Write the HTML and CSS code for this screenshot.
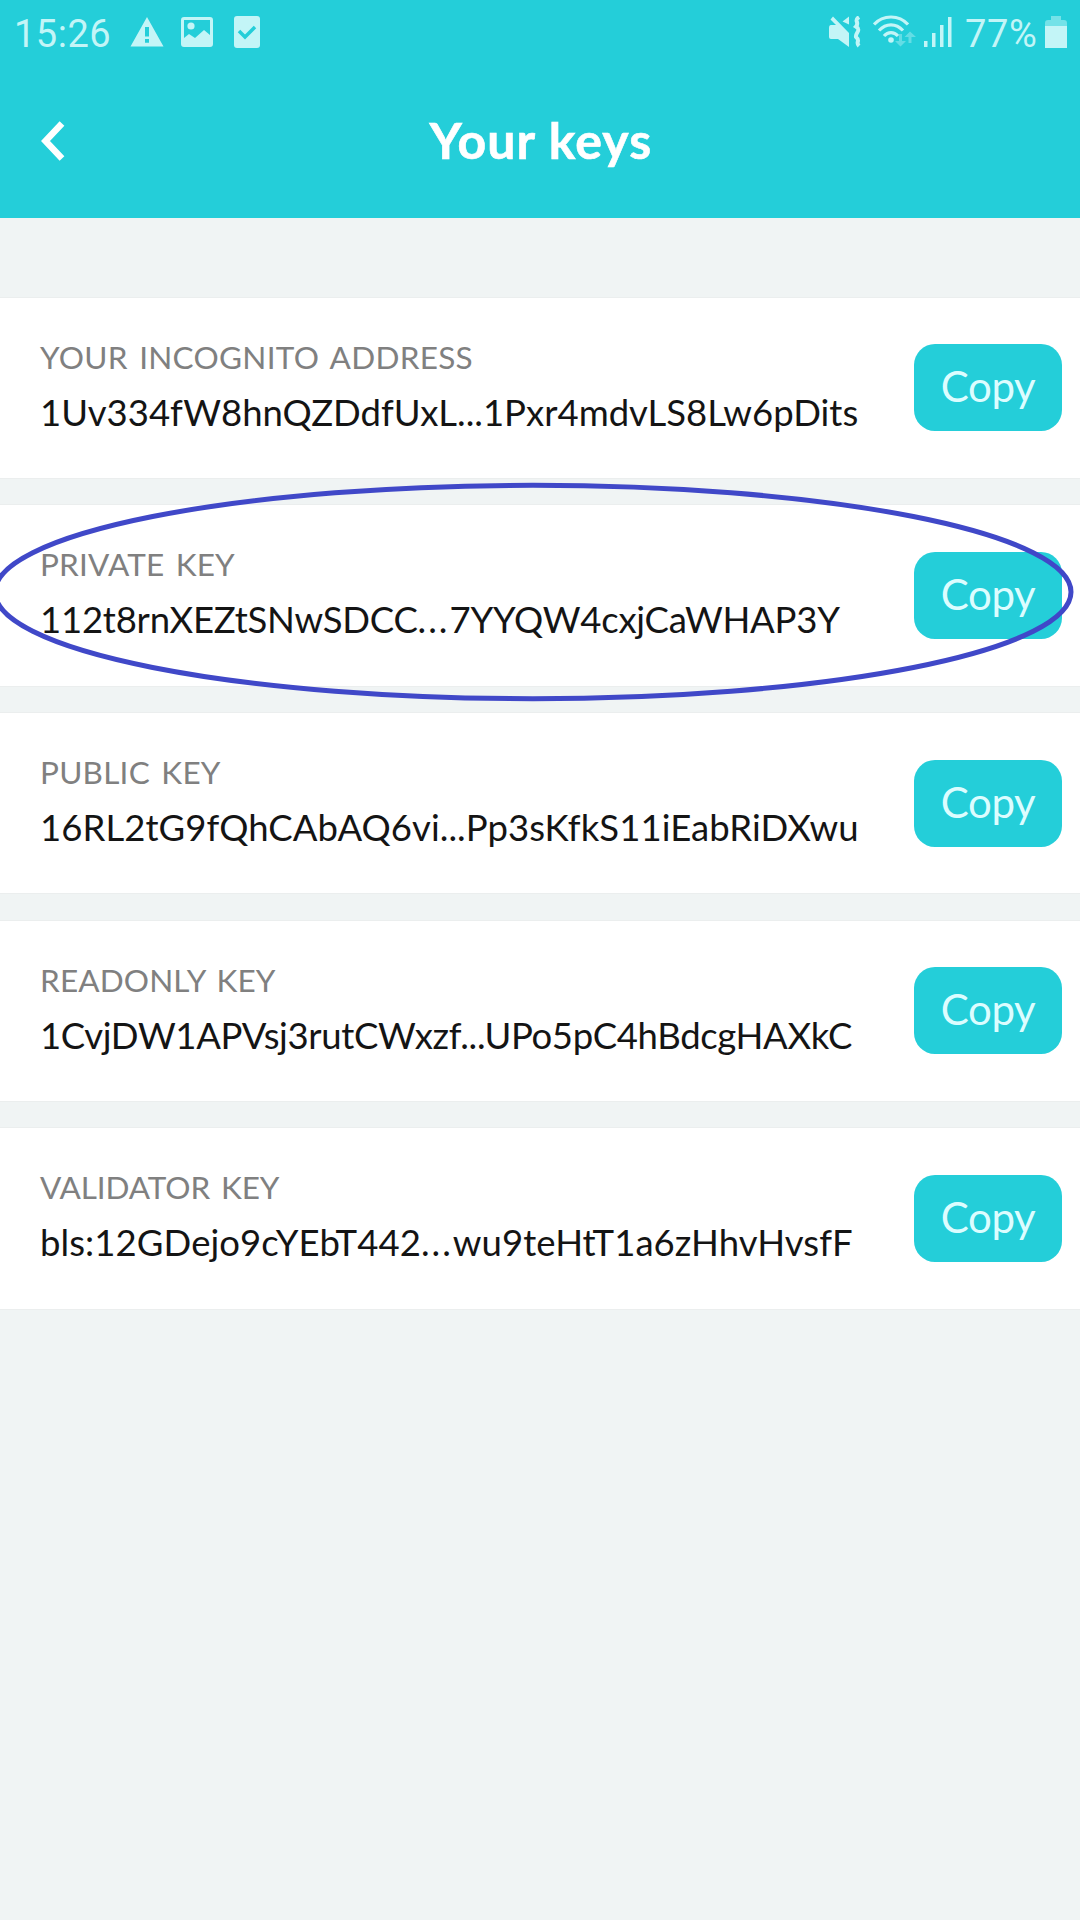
FILE: index.html
```
<!DOCTYPE html>
<html lang="en">
<head>
<meta charset="utf-8">
<title>Your keys</title>
<link rel="stylesheet" href="styles.css">
</head>
<body>
<div class="screen">
  <div class="statusbar">
    <div class="status-left">
      <span class="clock">15:26</span>
      <svg class="icon-warning" width="34" height="30" viewBox="0 0 34 30"><path fill="currentColor" fill-rule="evenodd" d="M17 0 33.500 29.500H.5ZM15 10v9.500h4V10Zm0 12v3.800h4V22Z"/></svg>
      <svg class="icon-image" width="32" height="30" viewBox="0 0 32 30"><path fill="currentColor" fill-rule="evenodd" d="M3 0h26a3 3 0 0 1 3 3v24a3 3 0 0 1-3 3H3a3 3 0 0 1-3-3V3a3 3 0 0 1 3-3Zm0 3v18l5-4 6 4 9-8 6 5V3Z"/><circle cx="10" cy="9" r="3.600" fill="currentColor"/></svg>
      <svg class="icon-check" width="26" height="32" viewBox="0 0 26 32"><rect width="26" height="32" rx="3" fill="currentColor"/><path d="m5 15 6 6L21 11" fill="none" stroke="#24ced9" stroke-width="3.500"/></svg>
    </div>
    <div class="status-right">
      <svg class="icon-mute" width="33" height="32" viewBox="0 0 33 32"><path fill="currentColor" d="M4 .5 20 17v14L9 23H2q-2 0-2-2v-9q0-3 2-3h5L1.500 3.500ZM20 .5v8L13.500 5.500Z"/><path d="M30 1c-6 4 1 5-3 9.500 6 4-1 6 0 10.500 5 4-1 5 3 9" fill="none" stroke="currentColor" stroke-width="4"/></svg>
      <svg class="icon-wifi" width="43" height="33" viewBox="0 0 43 33"><g fill="none" stroke="currentColor" stroke-width="3.200"><path d="M1 9.500C10-.5 26-.5 35 9.500"/><path d="M6 15.500c7-7.500 17-7.500 24 0"/><path d="M11 21c4-4.500 10-4.500 14 0"/></g><circle cx="18" cy="25" r="2.800" fill="currentColor"/><path fill="currentColor" opacity=".4" d="M26 19h3v7h4l-5.500 5.500L22 26h4ZM35.500 28h3v-6H43l-6-5.500-5.500 5.500h4Z"/></svg>
      <svg class="icon-signal" width="28" height="30" viewBox="0 0 28 30"><path fill="currentColor" d="M0 24h3.500v6H0ZM8 16h3.500v14H8ZM16 8h3.500v22H16ZM24 0h3.500v30H24Z"/></svg>
      <span class="percent">77%</span>
      <svg class="icon-battery" width="22" height="32" viewBox="0 0 22 32"><path fill="currentColor" opacity=".5" d="M6 0h10v4h3q3 0 3 3v3H0V7q0-3 3-3h3Z"/><path fill="currentColor" d="M0 10h22v22H0Z"/></svg>
    </div>
  </div>
  <header class="header">
    <svg class="back" width="25" height="40" viewBox="0 0 25 40"><path d="M22 2.500 5.500 20 22 37.500" fill="none" stroke="#fff" stroke-width="6.500"/></svg>
    <h1 class="title">Your keys</h1>
  </header>
  <main class="keys">
    <section class="key">
      <div class="info"><div class="label address-label">YOUR INCOGNITO ADDRESS</div><div class="value">1Uv334fW8hnQZDdfUxL...1Pxr4mdvLS8Lw6pDits</div></div>
      <button class="copy">Copy</button>
    </section>
    <section class="key highlighted">
      <div class="info"><div class="label private-label">PRIVATE KEY</div><div class="value private-value">112t8rnXEZtSNwSDCC<span class="dots">...</span>7YYQW4cxjCaWHAP3Y</div></div>
      <button class="copy">Copy</button>
      <svg class="ellipse" width="1080" height="220" viewBox="0 0 1080 220"><ellipse cx="533" cy="110" rx="538" ry="106.700" fill="none" stroke="#4048c8" stroke-width="5"/></svg>
    </section>
    <section class="key">
      <div class="info"><div class="label public-label">PUBLIC KEY</div><div class="value public-value">16RL2tG9fQhCAbAQ6vi...Pp3sKfkS11iEabRiDXwu</div></div>
      <button class="copy">Copy</button>
    </section>
    <section class="key">
      <div class="info"><div class="label readonly-label">READONLY KEY</div><div class="value readonly-value">1CvjDW1APVsj3rutCWxzf...UPo5pC4hBdcgHAXkC</div></div>
      <button class="copy">Copy</button>
    </section>
    <section class="key">
      <div class="info"><div class="label validator-label">VALIDATOR KEY</div><div class="value validator-value">bls:12GDejo9cYEbT442<span class="dots">...</span>wu9teHtT1a6zHhvHvsfF</div></div>
      <button class="copy">Copy</button>
    </section>
  </main>
</div>
</body>
</html>
```
FILE: styles.css
```
* { box-sizing: border-box; }
body { margin: 0; background: #f0f4f4; font-family: Lato, "Liberation Sans", sans-serif; }
.screen { width: 1080px; height: 1920px; overflow: hidden; background: #f0f4f4; }

.statusbar {
  height: 66px; padding: 0 13px 0 14px; background: #24ced9; color: #c3f5f7;
  display: flex; justify-content: space-between; align-items: center;
  font: 38px/66px Roboto, sans-serif;
}
.status-left, .status-right { display: flex; align-items: center; height: 66px; }
.status-left svg, .status-right svg { display: block; flex: none; margin-bottom: 3px; }
.clock { width: 116px; letter-spacing: .5px; padding-top: 1px; }
.icon-image { margin-left: 17px; }
.icon-check { margin-left: 21px; }
.icon-wifi { margin-left: 11px; }
.icon-signal { margin-left: 8px; }
.percent { margin-left: 13px; width: 80px; letter-spacing: .6px; padding-top: 1px; }

.header {
  height: 152px; padding: 0 38px 0 40px; background: #24ced9;
  display: grid; grid-template-columns: 25px 1fr 25px; align-items: start;
}
.back { margin-top: 55px; }
.title {
  margin: 44px 0 0; text-align: center; color: #fff;
  font-size: 50px; line-height: 60px; font-weight: 700; letter-spacing: 1.15px;
  -webkit-text-stroke: .6px #fff;
}

.keys { margin-top: 79.600px; display: flex; flex-direction: column; gap: 27.400px; }
.key {
  position: relative; height: 180.300px; padding: 0 18px 0 40px; background: #fff;
  box-shadow: 0 0 0 1px #ebeeee;
  display: flex; align-items: center; justify-content: space-between;
}
.highlighted { z-index: 1; }
.info { height: 104px; display: flex; flex-direction: column; gap: 13px; white-space: nowrap; }
.label { height: 40px; line-height: 40px; font-size: 31.500px; color: #808080; word-spacing: 3px; margin-top: 1px; }
.value { height: 44px; line-height: 44px; font-size: 36.500px; color: #141414; }
.copy {
  width: 148px; height: 87px; margin: 0; padding: 0 0 2px; border: 0; border-radius: 21px;
  background: #24ced9; color: #dcfdff; font: 42px/85px Lato, sans-serif; letter-spacing: -.4px;
}
.address-label { letter-spacing: .3px; }
.private-label { letter-spacing: .2px; }
.public-label { letter-spacing: .25px; }
.readonly-label { letter-spacing: .15px; }
.validator-label { letter-spacing: -.1px; }
.private-value { letter-spacing: -.23px; }
.public-value { letter-spacing: .06px; }
.readonly-value { letter-spacing: -.35px; }
.validator-value { letter-spacing: .08px; }
.dots { letter-spacing: 2px; }

/* marker lying over the private key row */
.ellipse { position: absolute; left: 0; top: -23px; pointer-events: none; }
```
